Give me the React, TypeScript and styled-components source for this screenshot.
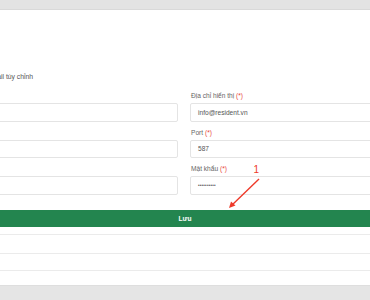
import styled, { createGlobalStyle } from 'styled-components';

const GlobalStyle = createGlobalStyle`
  html, body {
    margin: 0;
    padding: 0;
    background: #ffffff;
    overflow: hidden;
  }
  body {
    font-family: 'Liberation Sans', Arial, sans-serif;
  }
`;

type Field = {
  label: string;
  value?: string;
  type?: string;
};

const leftFields: Field[] = [
  { label: 'Máy chủ SMTP' },
  { label: 'Email đăng nhập' },
  { label: 'Mã hóa' },
];

const rightFields: Field[] = [
  { label: 'Địa chỉ hiển thị', value: 'info@resident.vn' },
  { label: 'Port', value: '587' },
  { label: 'Mật khẩu', value: '••••••••••', type: 'password' },
];

export default function App() {
  return (
    <Page>
      <GlobalStyle />
      <TopBar />
      <Main>
        <Title>Email tùy chỉnh</Title>
        <FormGrid>
          <Column>
            {leftFields.map((f) => (
              <FieldBox key={f.label}>
                <Label>
                  {f.label} <Req>(*)</Req>
                </Label>
                <Input />
              </FieldBox>
            ))}
          </Column>
          <Column>
            {rightFields.map((f) => (
              <FieldBox key={f.label}>
                <Label>
                  {f.label} <Req>(*)</Req>
                </Label>
                <Input $dots={f.type === 'password'}>{f.value}</Input>
              </FieldBox>
            ))}
          </Column>
        </FormGrid>
        <SaveButton>Lưu</SaveButton>
        <RowList>
          <Row $h={19} />
          <Row $h={17} />
          <Row $h={15.5} />
        </RowList>
      </Main>
      <Footer />
      <Annotation width="370" height="300" viewBox="0 0 370 300">
        <text x="253.5" y="173" fill="#ee3a2a" fontSize="10" fontFamily="Liberation Sans, Arial, sans-serif">
          1
        </text>
        <line x1="259" y1="179" x2="231.5" y2="205.5" stroke="#ee3a2a" strokeWidth="1.4" />
        <path d="M229 208 L231 201.5 L235.5 205.5 Z" fill="#ee3a2a" />
      </Annotation>
    </Page>
  );
}

const Page = styled.div`
  position: relative;
  width: 370px;
  height: 300px;
  display: flex;
  flex-direction: column;
  overflow: hidden;
`;

const TopBar = styled.div`
  height: 10px;
  flex-shrink: 0;
  background: #e3e3e3;
  border-bottom: 1px solid #d9d9d9;
  box-sizing: border-box;
`;

const Main = styled.div`
  flex-shrink: 0;
  display: flex;
  flex-direction: column;
  padding-top: 63px;
`;

const Title = styled.div`
  margin-left: -13px;
  height: 8px;
  line-height: 8px;
  font-size: 6.8px;
  color: #555;
`;

const FormGrid = styled.div`
  display: grid;
  grid-template-columns: 300px 300px;
  column-gap: 12px;
  margin-left: -122px;
  margin-top: 11px;
`;

const Column = styled.div`
  display: flex;
  flex-direction: column;
  gap: 7px;
`;

const FieldBox = styled.div`
  display: flex;
  flex-direction: column;
  gap: 3px;
`;

const Label = styled.div`
  height: 8px;
  line-height: 8px;
  font-size: 6.6px;
  color: #666;
  padding-left: 1px;
`;

const Req = styled.span`
  color: #e8453c;
`;

const Input = styled.div<{ $dots?: boolean }>`
  height: 18.5px;
  box-sizing: border-box;
  border: 1px solid #e4e4e4;
  border-radius: 2px;
  padding: 0 7px;
  display: flex;
  align-items: center;
  font-size: ${(p) => (p.$dots ? '4.5px' : '6.6px')};
  letter-spacing: ${(p) => (p.$dots ? '0.2px' : '0')};
  color: #555;
  background: #fff;
`;

const SaveButton = styled.div`
  margin-top: 15px;
  height: 17px;
  background: #23854f;
  color: #fff;
  font-size: 6.6px;
  font-weight: bold;
  display: flex;
  align-items: center;
  justify-content: center;
`;

const RowList = styled.div`
  margin-top: 7px;
  display: flex;
  flex-direction: column;
`;

const Row = styled.div<{ $h: number }>`
  height: ${(p) => p.$h}px;
  box-sizing: border-box;
  border-top: 1.5px solid #ebebeb;
`;

const Footer = styled.div`
  height: 15px;
  flex-shrink: 0;
  box-sizing: border-box;
  background: #e5e5e5;
  border-top: 1px solid #dedede;
`;

const Annotation = styled.svg`
  position: absolute;
  left: 0;
  top: 0;
  pointer-events: none;
`;
